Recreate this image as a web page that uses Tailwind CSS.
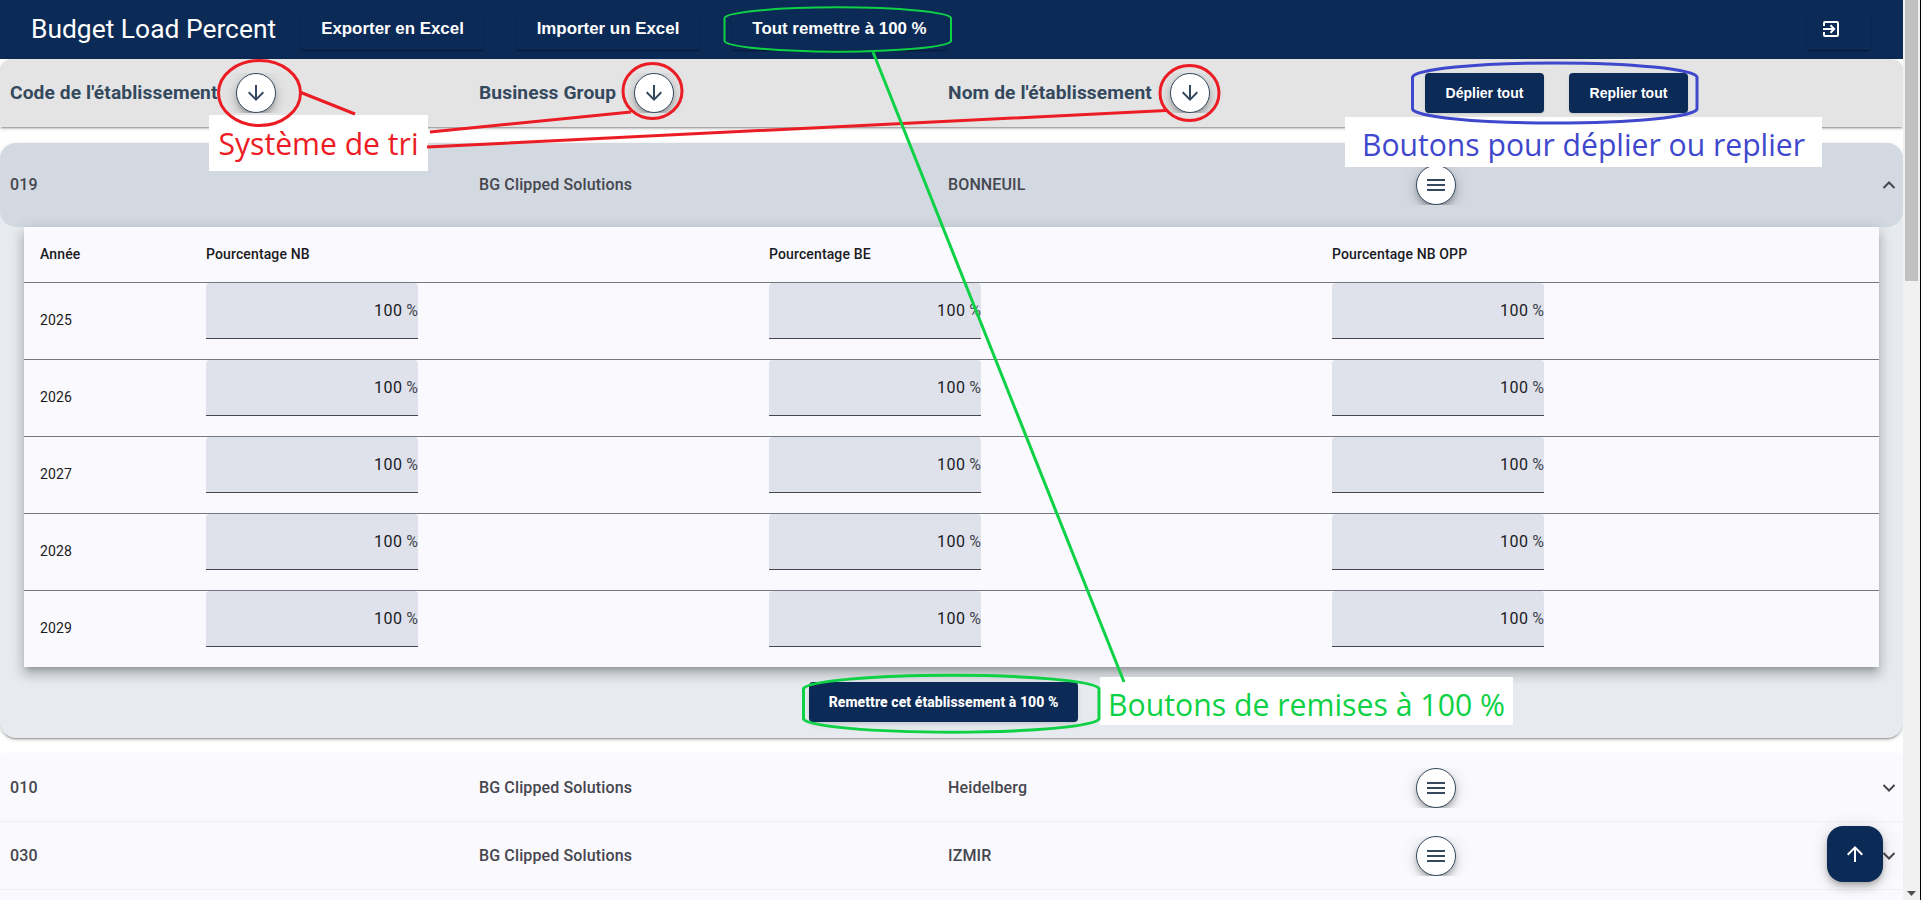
<!DOCTYPE html>
<html lang="fr">
<head>
<meta charset="utf-8">
<title>Budget Load Percent</title>
<script src="https://cdn.jsdelivr.net/npm/@tailwindcss/browser@4"></script>
</head>
<body class="bg-white">
<svg class="hidden">
  <symbol id="down" viewBox="0 0 24 24"><path d="M20 12l-1.41-1.41L13 16.17V4h-2v12.17l-5.58-5.59L4 12l8 8 8-8z"/></symbol>
  <symbol id="up" viewBox="0 0 24 24"><path d="M4 12l1.41 1.41L11 7.83V20h2V7.83l5.58 5.59L20 12l-8-8-8 8z"/></symbol>
  <symbol id="menu" viewBox="0 0 24 24"><path d="M3 18h18v-2H3v2zm0-5h18v-2H3v2zm0-7v2h18V6H3z"/></symbol>
</svg>
<div class="relative flex h-[900px] w-[1921px] overflow-hidden font-['Roboto',sans-serif]">
  <main class="flex w-[1903px] flex-col overflow-hidden">
    <header class="flex h-[59px] shrink-0 items-center bg-[#0c2a56] pl-[31px] pr-8 text-white">
      <h1 class="w-[270px] whitespace-nowrap text-[26.4px] leading-none">Budget Load Percent</h1>
      <nav class="flex flex-1 gap-8 font-['Liberation_Sans',sans-serif] text-[16.9px] font-bold">
        <button class="h-10 w-[183px] whitespace-nowrap rounded pb-px shadow-[0_2px_1px_-1px_rgba(0,0,0,.3),0_1px_2px_rgba(0,0,0,.2)]">Exporter en Excel</button>
        <button class="h-10 w-[184px] whitespace-nowrap rounded pb-px shadow-[0_2px_1px_-1px_rgba(0,0,0,.3),0_1px_2px_rgba(0,0,0,.2)]">Importer un Excel</button>
        <button class="h-10 w-[215px] whitespace-nowrap rounded pb-px shadow-[0_2px_1px_-1px_rgba(0,0,0,.3),0_1px_2px_rgba(0,0,0,.2)]">Tout remettre à 100 %</button>
      </nav>
      <button class="flex h-10 w-16 items-center rounded pb-[2px] pl-[15px] shadow-[0_2px_1px_-1px_rgba(0,0,0,.3),0_1px_2px_rgba(0,0,0,.2)]">
        <svg class="size-[18px]" viewBox="0 0 18 18" fill="none" stroke="currentColor" stroke-width="2"><path d="M2 6V3Q2 2 3 2H15Q16 2 16 3V15Q16 16 15 16H3Q2 16 2 15V12M1 9H12M8.5 5.3L12.2 9L8.5 12.7"/></svg>
      </button>
    </header>

    <section class="grid h-[68px] shrink-0 grid-cols-[469px_469px_477px_1fr] items-center rounded-t-xl bg-[#e4e4e4] pl-[10px] text-[19.2px] font-bold tracking-[.1px] text-[#34495e] shadow-[0_3px_1px_-2px_rgba(0,0,0,.2),0_2px_2px_rgba(0,0,0,.14),0_1px_5px_rgba(0,0,0,.12)]">
      <div class="flex items-center"><span class="w-[226px] whitespace-nowrap">Code de l'établissement</span><div class="-mx-4 overflow-hidden px-4"><button class="flex size-10 items-center justify-center rounded-full border border-[#34495e] bg-white shadow-[0_3px_5px_-1px_rgba(0,0,0,.2),0_6px_10px_rgba(0,0,0,.14),0_1px_18px_rgba(0,0,0,.12)]"><svg class="size-6" fill="#34495e"><use href="#down"/></svg></button></div></div>
      <div class="flex items-center"><span class="w-[155px] whitespace-nowrap">Business Group</span><div class="-mx-4 overflow-hidden px-4"><button class="flex size-10 items-center justify-center rounded-full border border-[#34495e] bg-white shadow-[0_3px_5px_-1px_rgba(0,0,0,.2),0_6px_10px_rgba(0,0,0,.14),0_1px_18px_rgba(0,0,0,.12)]"><svg class="size-6" fill="#34495e"><use href="#down"/></svg></button></div></div>
      <div class="flex items-center"><span class="w-[222px] whitespace-nowrap">Nom de l'établissement</span><div class="-mx-4 overflow-hidden px-4"><button class="flex size-10 items-center justify-center rounded-full border border-[#34495e] bg-white shadow-[0_3px_5px_-1px_rgba(0,0,0,.2),0_6px_10px_rgba(0,0,0,.14),0_1px_18px_rgba(0,0,0,.12)]"><svg class="size-6" fill="#34495e"><use href="#down"/></svg></button></div></div>
      <div class="flex gap-[25px] font-['Liberation_Sans',sans-serif] text-sm tracking-normal text-white">
        <button class="h-10 w-[119px] rounded bg-[#0c2a56] shadow-sm">Déplier tout</button>
        <button class="h-10 w-[119px] rounded bg-[#0c2a56] shadow-sm">Replier tout</button>
      </div>
    </section>

    <section class="mt-4 flex h-[595px] shrink-0 flex-col rounded-2xl bg-[#e7ebef] shadow-[0_3px_1px_-2px_rgba(0,0,0,.2),0_2px_2px_rgba(0,0,0,.14),0_1px_5px_rgba(0,0,0,.12)]">
      <div class="grid h-[84px] shrink-0 grid-cols-[469px_469px_468px_1fr_30px] items-center rounded-2xl bg-[#d2d9e1] pl-[10px] font-medium tracking-[.13px] text-[#46464f]">
        <span>019</span><span>BG Clipped Solutions</span><span>BONNEUIL</span>
        <div class="-ml-4 w-18 overflow-hidden px-4"><div class="flex size-10 items-center justify-center rounded-full border border-[#34495e] bg-white shadow-[0_3px_5px_-1px_rgba(0,0,0,.2),0_6px_10px_rgba(0,0,0,.14),0_1px_18px_rgba(0,0,0,.12)]"><svg class="size-6" fill="#34495e"><use href="#menu"/></svg></div></div>
        <svg class="ml-2 size-4" fill="none" stroke="#46464f" stroke-width="2"><path d="M2.5 11L8 5.5L13.5 11"/></svg>
      </div>
      <div id="table" class="z-10 mx-6 w-[1855px] bg-[#faf9fd] text-sm tracking-[.13px] text-[#1a1b1f] shadow-[0_5px_5px_-3px_rgba(0,0,0,.2),0_8px_10px_1px_rgba(0,0,0,.14),0_3px_14px_2px_rgba(0,0,0,.12)]">
        <div class="grid h-14 grid-cols-[166px_563px_563px_1fr] items-center border-b border-[#74777f] pb-[2px] pl-4 font-medium">
          <span>Année</span><span>Pourcentage NB</span><span>Pourcentage BE</span><span>Pourcentage NB OPP</span>
        </div>
        <div id="rows"></div>
      </div>
      <button class="z-10 mx-auto mt-[15px] h-10 w-[269px] shrink-0 translate-x-[-8px] whitespace-nowrap rounded bg-[#0c2a56] text-sm font-extrabold tracking-[.07px] text-white shadow-md">Remettre cet établissement à 100 %</button>
    </section>

    <section id="list" class="mt-4 shrink-0 shadow-[0_2px_5px_rgba(0,0,0,.12)]"></section>
  </main>

  <aside class="flex w-[17px] flex-col items-center justify-between bg-[#f1f1f1] pb-1">
    <div class="h-[281px] w-[13px] bg-[#c1c1c1]"></div>
    <svg width="9" height="5" fill="#505050"><path d="M0 0H9L4.500 5z"/></svg>
  </aside>
  <div class="w-px bg-black"></div>

  <button class="absolute left-[1827px] top-[826px] z-20 flex size-14 items-center justify-center rounded-2xl bg-[#0c2a56] shadow-[0_3px_5px_-1px_rgba(0,0,0,.2),0_6px_10px_rgba(0,0,0,.14),0_1px_18px_rgba(0,0,0,.12)]"><svg class="size-6" fill="white"><use href="#up"/></svg></button>

  <!-- hand-drawn annotations -->
  <svg class="absolute inset-0 z-30 font-['Open_Sans','Noto_Sans',sans-serif]" width="1921" height="900" fill="none" stroke-width="3">
    <g fill="#fff"><rect x="209" y="115" width="219" height="56"/><rect x="1345" y="117" width="477" height="50"/><rect x="1100" y="677" width="413" height="48"/></g>
    <g stroke="#ec1c24">
      <ellipse cx="259.500" cy="93" rx="41" ry="32.500"/><ellipse cx="652.500" cy="91" rx="29.500" ry="27.500"/><ellipse cx="1189.500" cy="93" rx="29.500" ry="27.500"/>
      <path d="M301 92.500L355 114M430 132L631 112M427 147L1166 110.500"/>
    </g>
    <path stroke="#3f48cc" d="M1412.500 77A142.300 14.500 0 0 1 1697 77V109A142.300 14.500 0 0 1 1412.500 109Z"/>
    <g stroke="#0ed145">
      <path stroke-width="2" d="M724.500 18A113.300 11 0 0 1 951 18V41A113.300 11 0 0 1 724.500 41Z"/>
      <path d="M803.500 688.500A148 14 0 0 1 1099 688.500V719A148 14 0 0 1 803.500 719Z"/>
      <path d="M873 52L1124 682"/>
    </g>
    <g font-size="30.500" stroke="none">
      <text x="218.500" y="154.500" fill="#ec1c24" textLength="200" lengthAdjust="spacingAndGlyphs">Système de tri</text>
      <text x="1362" y="156" fill="#3f48cc" textLength="443" lengthAdjust="spacingAndGlyphs">Boutons pour déplier ou replier</text>
      <text x="1108" y="716" fill="#0ed145" textLength="397" lengthAdjust="spacingAndGlyphs">Boutons de remises à 100 %</text>
    </g>
  </svg>
</div>
<script>
  const field = '<div><div class="flex h-14 w-[212px] justify-end rounded-t border-b border-[#44474e] bg-[#dfe2eb] pt-4 text-base leading-6"><span class="tracking-[.4px]">100</span><span class="pl-1 tracking-normal text-[#44474e]">%</span></div></div>';
  document.getElementById('rows').innerHTML = [2025, 2026, 2027, 2028, 2029].map((y, i) =>
    `<div class="grid grid-cols-[166px_563px_563px_1fr] pl-4 ${i < 4 ? 'h-[77px] border-b border-[#74777f]' : 'h-19'}"><span class="self-center pb-[2px]">${y}</span>${field.repeat(3)}</div>`).join('');
  document.getElementById('list').innerHTML = [['010', 'Heidelberg'], ['030', 'IZMIR'], ['', '']].map(([c, n]) =>
    `<div class="grid h-[68px] grid-cols-[469px_469px_468px_1fr_30px] items-center border-b border-[#f0eff4] bg-[#faf9fd] pl-[10px] font-medium tracking-[.13px] text-[#46464f]">${c ? `<span>${c}</span><span>BG Clipped Solutions</span><span>${n}</span><div class="-ml-4 w-18 overflow-hidden px-4"><div class="flex size-10 items-center justify-center rounded-full border border-[#34495e] bg-white shadow-[0_3px_5px_-1px_rgba(0,0,0,.2),0_6px_10px_rgba(0,0,0,.14),0_1px_18px_rgba(0,0,0,.12)]"><svg class="size-6" fill="#34495e"><use href="#menu"/></svg></div></div><svg class="ml-2 size-4" fill="none" stroke="#46464f" stroke-width="2"><path d="M2.500 5L8 10.500L13.500 5"/></svg>` : ''}</div>`).join('');
</script>
</body>
</html>
